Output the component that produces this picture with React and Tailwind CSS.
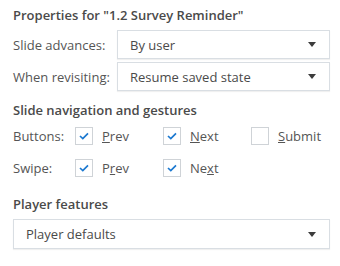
import React from 'react'

const FONT = { fontFamily: '"Open Sans", "Noto Sans", sans-serif' }

function Caret() {
  return (
    <svg width="8" height="5" viewBox="0 0 8 5" className="shrink-0">
      <path d="M0 0 L8 0 L4 5 Z" fill="#3c3c3c" />
    </svg>
  )
}

function Select({ value, className = '' }) {
  return (
    <div className={`flex items-center justify-between bg-white border border-[#d9dee3] shadow-[0_1px_1px_rgba(0,0,0,0.06)] pl-[12px] pr-[13px] text-[#4a4a4a] ${className}`}>
      <span>{value}</span>
      <Caret />
    </div>
  )
}

function Check({ checked, children }) {
  return (
    <div className="flex items-center w-[88px] shrink-0 last:w-auto">
      <span className="w-[18px] h-[18px] shrink-0 border border-[#cfd3d7] bg-white flex items-center justify-center">
        {checked && (
          <svg width="10" height="8" viewBox="0 0 10 8">
            <path d="M1 4 L3.8 6.6 L9 1.4" fill="none" stroke="#1b78d0" strokeWidth="1.7" />
          </svg>
        )}
      </span>
      <span className="ml-[9px] text-[#555]">{children}</span>
    </div>
  )
}

export default function App() {
  return (
    <div style={FONT} className="w-[340px] h-[266px] bg-white pl-[13px] pr-[10px] pt-[5px] text-[13px] leading-[20px]">
      <div className="font-semibold text-[#4a4a4a]">Properties for "1.2 Survey Reminder"</div>

      <div className="mt-[5px] flex flex-col gap-[3px]">
        <div className="flex items-center">
          <span className="w-[104px] shrink-0 text-[#555]">Slide advances:</span>
          <Select value="By user" className="flex-1 h-[29px]" />
        </div>
        <div className="flex items-center">
          <span className="w-[104px] shrink-0 text-[#555]">When revisiting:</span>
          <Select value="Resume saved state" className="flex-1 h-[29px]" />
        </div>
      </div>

      <div className="mt-[9px] font-semibold text-[#4a4a4a]">Slide navigation and gestures</div>
      <div className="flex items-center h-[32px]">
        <span className="w-[62px] shrink-0 text-[#555]">Buttons:</span>
        <Check checked><u>P</u>rev</Check>
        <Check checked><u>N</u>ext</Check>
        <Check><u>S</u>ubmit</Check>
      </div>
      <div className="flex items-center h-[32px]">
        <span className="w-[62px] shrink-0 text-[#555]">Swipe:</span>
        <Check checked>P<u>r</u>ev</Check>
        <Check checked>Ne<u>x</u>t</Check>
      </div>

      <div className="mt-[10px] font-semibold text-[#4a4a4a]">Player features</div>
      <Select value="Player defaults" className="mt-[5px] h-[30px]" />
    </div>
  )
}
